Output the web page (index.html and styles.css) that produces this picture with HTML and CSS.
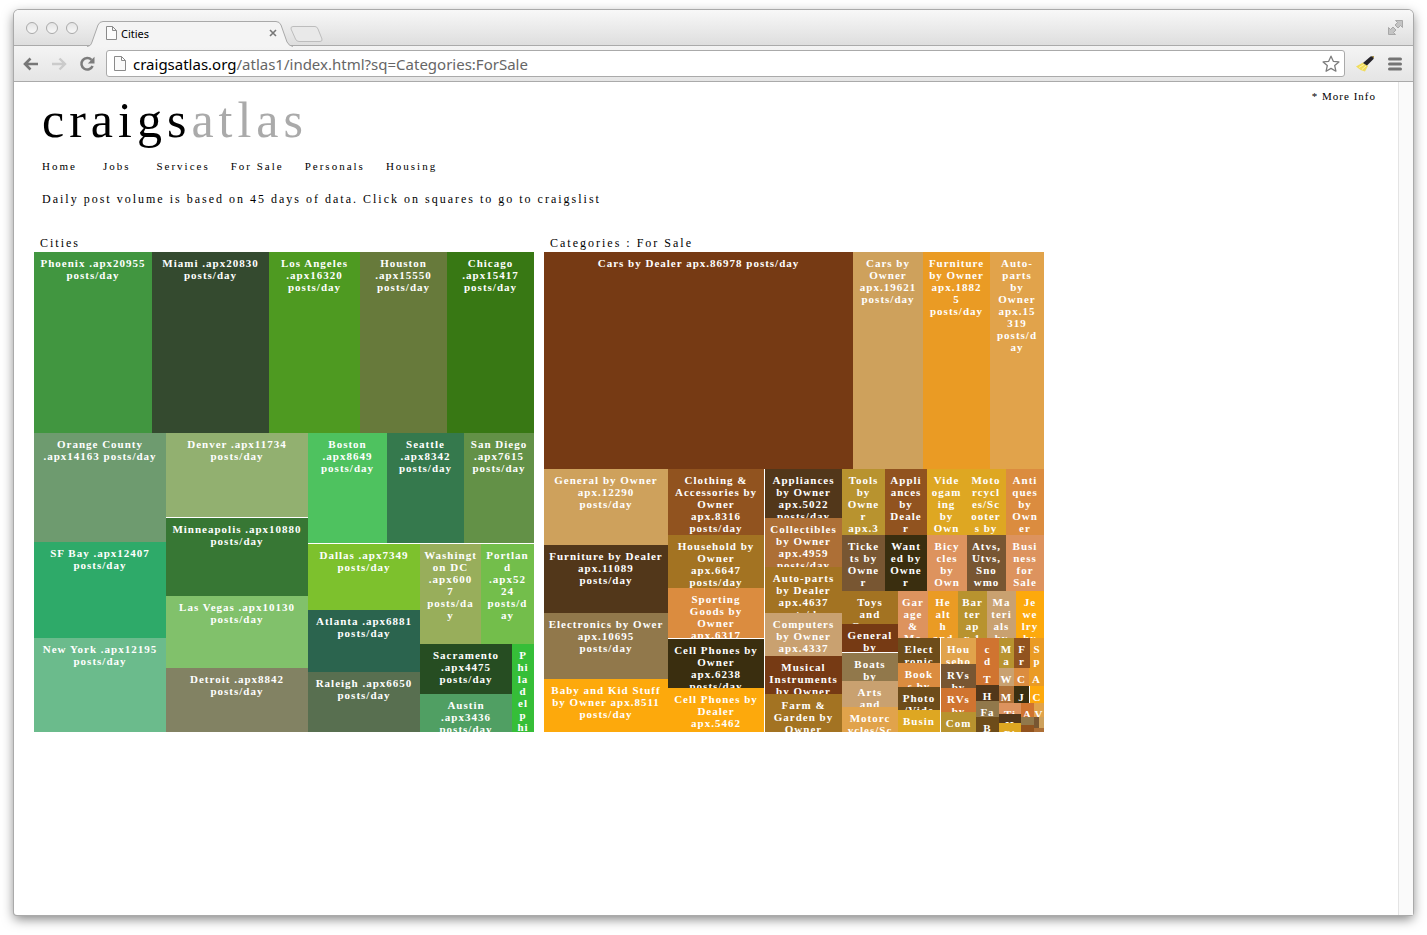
FILE: index.html
```html
<!DOCTYPE html>
<html lang="en">
<head>
    <meta charset="UTF-8">
    <meta name="viewport" content="width=device-width, initial-scale=1.0">
    <title>Cities</title>
    <link rel="stylesheet" href="styles.css">
</head>
<body>
    <div class="window">
        <div class="tab-strip">
            <div class="lights">
                <span></span>
                <span></span>
                <span></span>
            </div>
            <div class="tab">
                <svg class="tab-shape" viewBox="0 0 206 26" width="206" height="26">
                    <path d="M0 25.5C3 25 4 24 5 21L11 4Q12.500 .5 16 .5H189Q192.500 .5 194 4L200 21Q202 25 206 25.500V26H0Z" fill="#f4f4f4"/>
                    <path d="M0 25.500C3 25 4 24 5 21L11 4Q12.500 .5 16 .5H189Q192.500 .5 194 4L200 21Q202 25 206 25.500" fill="none" stroke="#a9a9a9"/>
                </svg>
                <svg class="tab-page" viewBox="0 0 11 14" width="11" height="14">
                    <path d="M.5 .5H6.500L10.500 4.500V13.500H.5ZM6.500 .5V4.500H10.500" fill="#fcfcfc" stroke="#8a8a8a"/>
                </svg>
                <span class="tab-title">Cities</span>
                <button class="tab-close" aria-label="Close tab">
                    <svg viewBox="0 0 8 8" width="8" height="8"><path d="M1 1L7 7M7 1L1 7" stroke="#777" stroke-width="1.600"/></svg>
                </button>
            </div>
            <button class="new-tab" aria-label="New tab">
                <svg viewBox="0 0 33 17" width="33" height="17">
                    <path d="M3 .5H25Q27 .5 28 3L32 13Q32.500 15.500 30 15.500H9Q6.500 15.500 5.500 13L1 3Q.5 .5 3 .5Z" fill="#e9e9e9" stroke="#bdbdbd"/>
                </svg>
            </button>
            <button class="fullscreen" aria-label="Full screen">
                <svg viewBox="0 0 15 15" width="15" height="15">
                    <path d="M7.500 .5H14.500V7.500L12.500 5.500L10 8L7 5L9.500 2.500ZM.5 7.500L2.500 9.500L5 7L8 10L5.500 12.500L7.500 14.500H.5Z" fill="#c4c4c4" stroke="#9c9c9c" stroke-width=".8"/>
                </svg>
            </button>
        </div>

        <div class="toolbar">
            <button aria-label="Back">
                <svg viewBox="0 0 16 14" width="16" height="14"><path d="M15 7H2M7.500 1.500L2 7L7.500 12.500" fill="none" stroke="#777" stroke-width="2.600"/></svg>
            </button>
            <button aria-label="Forward">
                <svg viewBox="0 0 16 14" width="16" height="14"><path d="M1 7H14M8.500 1.500L14 7L8.500 12.500" fill="none" stroke="#cbcbcb" stroke-width="2.400"/></svg>
            </button>
            <button aria-label="Reload">
                <svg viewBox="0 0 16 16" width="16" height="16">
                    <path d="M12.500 3.800A5.800 5.800 0 1 0 13.600 10" fill="none" stroke="#7c7c7c" stroke-width="2.500"/>
                    <path d="M15.500 .8V7.500H8.800Z" fill="#7c7c7c"/>
                </svg>
            </button>
            <div class="address">
                <svg viewBox="0 0 12 15" width="12" height="15">
                    <path d="M.5 .5H7.500L11.500 4.500V14.500H.5ZM7.500 .5V4.500H11.500" fill="#fafafa" stroke="#8a8a8a"/>
                </svg>
                <div class="url"><b>craigsatlas.org</b>/atlas1/index.html?sq=Categories:ForSale</div>
                <svg viewBox="0 0 18 18" width="18" height="18">
                    <path d="M9 1.200L11.300 6.300L16.900 6.900L12.700 10.600L13.900 16.200L9 13.400L4.100 16.200L5.300 10.600L1.100 6.900L6.700 6.300Z" fill="#fff" stroke="#7d7d7d" stroke-width="1.300" stroke-linejoin="round"/>
                </svg>
            </div>
            <button class="broom" aria-label="Clean up">
                <svg viewBox="0 0 19 17" width="19" height="17">
                    <path d="M0 11.500L7 7.500L12 11L9 16.500Q4 15.500 0 11.500Z" fill="#f0dc5c"/>
                    <path d="M3 12.500L8 9.500M6 14.500L10 11" stroke="#fff4a6"/>
                    <path d="M7 8L14.500 1.500L18 1L17.500 4L11 10.500Z" fill="#26242a"/>
                    <path d="M16 1.500L18 1L17.500 3Z" fill="#d7b94b"/>
                </svg>
            </button>
            <button class="menu" aria-label="Menu">
                <svg viewBox="0 0 14 14" width="14" height="14"><path d="M1.500 2H12.500M1.500 7H12.500M1.500 12H12.500" stroke="#747474" stroke-width="3" stroke-linecap="round"/></svg>
            </button>
        </div>

        <div class="page">
            <div class="content">
                <a class="more-info" href="#">* More Info</a>
                <h1>craigs<span>atlas</span></h1>
                <nav>
                    <a class="short" href="#">Home</a>
                    <a class="short" href="#">Jobs</a>
                    <a href="#">Services</a>
                    <a href="#">For Sale</a>
                    <a href="#">Personals</a>
                    <a href="#">Housing</a>
                </nav>
                <p class="intro">Daily post volume is based on 45 days of data. Click on squares to go to craigslist</p>
                <div class="charts">
                    <section>
                        <h2>Cities</h2>
                        <div class="treemap" id="cities"></div>
                    </section>
                    <section>
                        <h2>Categories : For Sale</h2>
                        <div class="treemap" id="categories"></div>
                    </section>
                </div>
            </div>
            <div class="scroll-track"></div>
        </div>
    </div>

    <script src="treemap.js"></script>
</body>
</html>
```

FILE: styles.css
```css
* {
    box-sizing: border-box;
}
body {
    display: flex;
    min-height: 100vh;
    margin: 0;
    padding: 10px 14px 20px;
    background: white;
    color: black;
    font-family: "Liberation Serif", "Times New Roman", serif;
}
button {
    display: flex;
    padding: 0;
    border: none;
    background: none;
    cursor: pointer;
}
a {
    color: inherit;
    text-decoration: none;
}
.window {
    flex: 1;
    min-width: 0;
    display: flex;
    flex-direction: column;
    border-radius: 5px 5px 3px 3px;
    background: white;
    box-shadow: 0 0 0 1px #aaa, 0 4px 12px rgba(0, 0, 0, 0.5);
}

/* browser bars */
.tab-strip {
    display: flex;
    align-items: center;
    height: 36px;
    border-bottom: 1px solid #aaa;
    border-radius: 5px 5px 0 0;
    background: linear-gradient(#f8f8f8, #dedede);
}
.lights {
    display: flex;
    gap: 8px;
    margin-left: 12px;
}
.lights span {
    width: 12px;
    height: 12px;
    border: 1px solid #aaa;
    border-radius: 50%;
    background: linear-gradient(#e4e4e4, #f8f8f8);
}
.tab {
    position: relative;
    align-self: flex-end;
    display: flex;
    align-items: center;
    width: 206px;
    height: 24px;
    margin-left: 9px;
    padding: 0 16px 0 19px;
}
.tab-shape {
    position: absolute;
    left: 0;
    top: 0;
}
.tab-page, .tab-title, .tab-close {
    position: relative;
}
.tab-title {
    flex: 1;
    margin-left: 4px;
    font: 11px "Noto Sans", sans-serif;
}
.new-tab {
    margin-top: 13px;
    margin-left: -3px;
}
.fullscreen {
    margin-left: auto;
    margin-right: 10px;
}
.toolbar {
    display: flex;
    align-items: center;
    height: 36px;
    padding: 0 11px 0 9px;
    border-bottom: 1px solid #aaa;
    background: linear-gradient(#f4f4f4, #e5e5e5);
}
.toolbar > button {
    margin-right: 12px;
}
.toolbar .broom {
    margin: 0 13px 0 11px;
}
.toolbar .menu {
    margin: 0;
}
.address {
    flex: 1;
    min-width: 0;
    display: flex;
    align-items: center;
    height: 27px;
    margin-left: -1px;
    padding: 0 4px 0 7px;
    border: 1px solid #aaa;
    border-radius: 3px;
    background: white;
}
.url {
    flex: 1;
    margin-left: 7px;
    color: #666;
    font: 15px "Noto Sans", sans-serif;
    white-space: nowrap;
    overflow: hidden;
}
.url b {
    color: black;
    font-weight: normal;
}

/* page */
.page {
    flex: 1;
    display: flex;
}
.content {
    position: relative;
    flex: 1;
    min-width: 0;
    padding: 8px 20px;
}
.scroll-track {
    width: 15px;
    border-left: 1px solid #e4e4e4;
    background: #fafafa;
}
.more-info {
    position: absolute;
    top: 7px;
    right: 22px;
    font-size: 11px;
    line-height: 14px;
    letter-spacing: 1px;
}
h1 {
    margin: 0 0 9px 8px;
    font-size: 50px;
    line-height: 60px;
    font-weight: normal;
    letter-spacing: 5px;
}
h1 span {
    color: #aaa;
}
nav {
    display: flex;
    gap: 21px;
    margin-left: 8px;
    font-size: 11px;
    line-height: 14px;
    letter-spacing: 2px;
}
nav .short {
    margin-right: 5px;
}
.intro {
    margin: 18px 0 28px 8px;
    font-size: 12px;
    line-height: 16px;
    letter-spacing: 2px;
}
.charts {
    display: flex;
    gap: 10px;
}
h2 {
    margin: 0 0 1px 6px;
    font-size: 12px;
    line-height: 16px;
    font-weight: normal;
    letter-spacing: 2px;
}
.treemap {
    display: flex;
    width: 500px;
    height: 480px;
}

/* every row, column and tile gets its share from the flex value */
.row, .column, .tile {
    min-width: 0;
    min-height: 0;
    overflow: hidden;
}
.row {
    display: flex;
}
.column {
    display: flex;
    flex-direction: column;
}
.tile {
    display: flex;
    justify-content: center;
    color: white;
    font-size: 11px;
    line-height: 12px;
    font-weight: bold;
    letter-spacing: 1px;
    text-align: center;
    white-space: pre;
}
.tile span {
    padding-top: 5px;
}
```

FILE: treemap.js
```js
// tile: [share, color, label]   group: [share, [children]]   gap: [share]
const cities = [
    [181, [
        [118, "#419640", "Phoenix .apx20955\nposts/day"],
        [117, "#344a2f", "Miami .apx20830\nposts/day"],
        [91, "#4e9a21", "Los Angeles\n.apx16320\nposts/day"],
        [87, "#677a3b", "Houston\n.apx15550\nposts/day"],
        [87, "#387814", "Chicago\n.apx15417\nposts/day"]
    ]],
    [299, [
        [132, [
            [109, "#6e9b6f", "Orange County\n.apx14163 posts/day"],
            [96, "#2eaa69", "SF Bay .apx12407\nposts/day"],
            [94, "#6bbb8c", "New York .apx12195\nposts/day"]
        ]],
        [142, [
            [84, "#92b070", "Denver .apx11734\nposts/day"],
            [1],
            [78, "#377734", "Minneapolis .apx10880\nposts/day"],
            [72, "#81c16b", "Las Vegas .apx10130\nposts/day"],
            [64, "#828263", "Detroit .apx8842\nposts/day"]
        ]],
        [226, [
            [110, [
                [79, "#4ec25f", "Boston\n.apx8649\nposts/day"],
                [77, "#35794d", "Seattle\n.apx8342\nposts/day"],
                [70, "#639147", "San Diego\n.apx7615\nposts/day"]
            ]],
            [1],
            [188, [
                [112, [
                    [66, "#7dc12d", "Dallas .apx7349\nposts/day"],
                    [62, "#2b644e", "Atlanta .apx6881\nposts/day"],
                    [60, "#586f50", "Raleigh .apx6650\nposts/day"]
                ]],
                [114, [
                    [100, [
                        [61, "#98ae5b", "Washingt\non DC\n.apx600\n7\nposts/da\ny"],
                        [53, "#73be4b", "Portlan\nd\n.apx52\n24\nposts/d\nay"]
                    ]],
                    [88, [
                        [92, [
                            [50, "#264d22", "Sacramento\n.apx4475\nposts/day"],
                            [38, "#509f63", "Austin\n.apx3436\nposts/day"]
                        ]],
                        [22, "#36be38", "P\nhi\nla\nd\nel\np\nhi"]
                    ]]
                ]]
            ]]
        ]]
    ]]
];

const categories = [
    [217, [
        [309, "#763a14", "Cars by Dealer apx.86978 posts/day"],
        [70, "#cea15c", "Cars by\nOwner\napx.19621\nposts/day"],
        [67, "#ea9b24", "Furniture\nby Owner\napx.1882\n5\nposts/day"],
        [54, "#e1a34b", "Auto-\nparts\nby\nOwner\napx.15\n319\nposts/d\nay"]
    ]],
    [263, [
        [124, [
            [76, "#cea15c", "General by Owner\napx.12290\nposts/day"],
            [68, "#52371a", "Furniture by Dealer\napx.11089\nposts/day"],
            [66, "#91784b", "Electronics by Ower\napx.10695\nposts/day"],
            [53, "#fda90c", "Baby and Kid Stuff\nby Owner apx.8511\nposts/day"]
        ]],
        [96, [
            [66, "#91531f", "Clothing &\nAccessories by\nOwner\napx.8316\nposts/day"],
            [53, "#a37322", "Household by\nOwner\napx.6647\nposts/day"],
            [50, "#db8c3f", "Sporting\nGoods by\nOwner\napx.6317"],
            [1],
            [49, "#3a2e0f", "Cell Phones by\nOwner\napx.6238\nposts/day"],
            [44, "#fda90c", "Cell Phones by\nDealer\napx.5462\nposts/day"]
        ]],
        [1],
        [77, [
            [49, "#52371a", "Appliances\nby Owner\napx.5022\nposts/day"],
            [49, "#ad6f36", "Collectibles\nby Owner\napx.4959\nposts/day"],
            [46, "#a37322", "Auto-parts\nby Dealer\napx.4637\nposts/day"],
            [43, "#c9a170", "Computers\nby Owner\napx.4337"],
            [38, "#763a14", "Musical\nInstruments\nby Owner"],
            [38, "#a37322", "Farm &\nGarden by\nOwner"]
        ]],
        [202, [
            [66, [
                [43, "#b8932f", "Tools\nby\nOwne\nr\napx.3"],
                [42, "#91531f", "Appli\nances\nby\nDeale\nr"],
                [39, "#dea722", "Vide\nogam\ning\nby\nOwn"],
                [40, "#dea722", "Moto\nrcycl\nes/Sc\nooter\ns by"],
                [38, "#db8c3f", "Anti\nques\nby\nOwn\ner"]
            ]],
            [56, [
                [43, "#785632", "Ticke\nts by\nOwne\nr\napx.3"],
                [42, "#3a2e0f", "Want\ned by\nOwne\nr\napx.3"],
                [40, "#dd935e", "Bicy\ncles\nby\nOwn"],
                [39, "#785632", "Atvs,\nUtvs,\nSno\nwmo\nbiles"],
                [38, "#dd935e", "Busi\nness\nfor\nSale\nby"]
            ]],
            [141, [
                [56, [
                    [33, "#a37322", "Toys\nand\nGames"],
                    [28, "#763a14", "General\nby"],
                    [1],
                    [28, "#91784b", "Boats\nby"],
                    [26, "#c9a170", "Arts\nand"],
                    [25, "#e1a34b", "Motorc\nycles/Sc"]
                ]],
                [146, [
                    [47, [
                        [30, "#dd935e", "Gar\nage\n&\nMo"],
                        [30, "#ea9b24", "He\nalt\nh\nand"],
                        [29, "#b8932f", "Bar\nter\nap\nx.1"],
                        [29, "#c9a170", "Ma\nteri\nals\nby"],
                        [28, "#fda90c", "Je\nwe\nlry\nby"]
                    ]],
                    [94, [
                        [42, [
                            [25, "#6d4c1a", "Elect\nronic"],
                            [24, "#db8c3f", "Book\ns by"],
                            [23, "#6d4c1a", "Photo\n/Vide"],
                            [22, "#dea722", "Busin"]
                        ]],
                        [1],
                        [35, [
                            [26, "#e1a34b", "Hou\nseho"],
                            [24, "#785632", "RVs\nby"],
                            [24, "#d07430", "RVs\nby"],
                            [20, "#b8932f", "Com"]
                        ]],
                        [68, [[94, [
                            [23, [
                                [30, "#d07430", "c\nd"],
                                [17, "#d07430", "T"],
                                [16, "#52371a", "H"],
                                [16, "#91784b", "Fa"],
                                [15, "#6d4c1a", "B"]
                            ]],
                            [45, [
                                [30, [
                                    [15, "#b8932f", "M\na"],
                                    [16, "#91531f", "F\nr"],
                                    [14, "#ea9b24", "S\np"]
                                ]],
                                [18, [
                                    [15, "#c9a170", "W"],
                                    [15, "#db8c3f", "C"],
                                    [15, "#ea9b24", "A"]
                                ]],
                                [17, [
                                    [15, "#ad6f36", "M"],
                                    [15, "#3a2e0f", "J"],
                                    [1],
                                    [14, "#fda90c", "C"]
                                ]],
                                [29, [
                                    [22, [
                                        [11, "#dd935e", "Ti"],
                                        [9, "#52371a", "H"],
                                        [9, "#dea722", "Pi"]
                                    ]],
                                    [23, [
                                        [14, [
                                            [13, "#d07430", "A"],
                                            [10, "#e1a34b", "V"]
                                        ]],
                                        [15, [
                                            [13, [
                                                [8, "#91784b", "T"],
                                                [7, "#91531f", ""]
                                            ]],
                                            [10, [
                                                [11, [
                                                    [5, "#785632", ""],
                                                    [5, "#cea15c", ""]
                                                ]],
                                                [4, "#ad6f36", ""]
                                            ]]
                                        ]]
                                    ]]
                                ]]
                            ]]
                        ]]]]
                    ]]
                ]]
            ]]
        ]]
    ]]
];

// rows and columns alternate as the tree goes down
function build(node, direction) {
    const [share, content, label] = node;
    const isTile = typeof content === "string";
    const el = document.createElement(isTile ? "a" : "div");
    el.style.flex = share + " 1 0px";
    if (isTile) {
        const text = document.createElement("span");
        text.textContent = label;
        el.className = "tile";
        el.href = "#";
        el.style.background = content;
        el.appendChild(text);
    } else if (content) {
        el.className = direction;
        const next = direction === "row" ? "column" : "row";
        content.forEach(child => el.appendChild(build(child, next)));
    }
    return el;
}

document.getElementById("cities").appendChild(build([1, cities], "column"));
document.getElementById("categories").appendChild(build([1, categories], "column"));
```
